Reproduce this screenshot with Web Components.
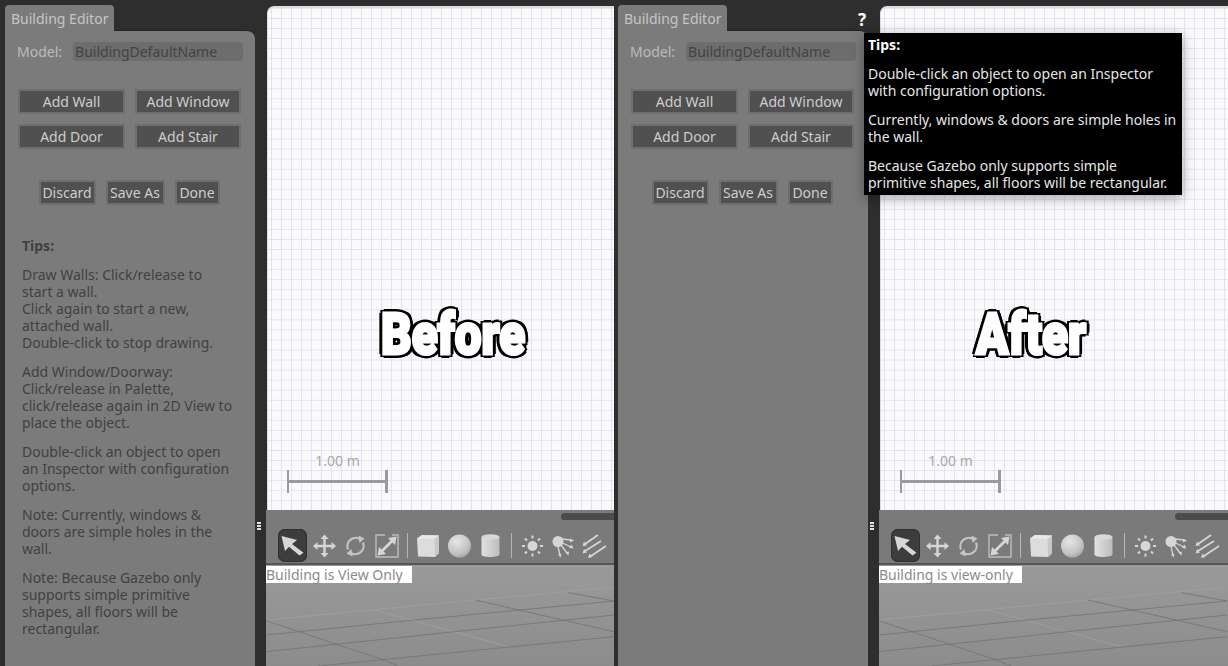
<!DOCTYPE html>
<html lang="en">
<head>
<meta charset="utf-8">
<title>Building Editor</title>
<style>
  html, body { margin: 0; height: 100%; overflow: hidden; background: #2e2e2e; }
  body { font: 14px/17px "Noto Sans", "Open Sans", sans-serif; }
  #compare { display: grid; grid-template-columns: 614px 614px; height: 666px; overflow: hidden; }
  #compare be-pane:last-child { margin-left: -1px; }
</style>
</head>
<body>
<div id="compare">
  <be-pane label="Before" status="Building is View Only">
    <p><b>Tips:</b></p>
    <p>Draw Walls: Click/release to start a wall.<br>Click again to start a new, attached wall.<br>Double-click to stop drawing.</p>
    <p>Add Window/Doorway: Click/release in Palette, click/release again in 2D View to place the object.</p>
    <p>Double-click an object to open an Inspector with configuration options.</p>
    <p>Note: Currently, windows &amp; doors are simple holes in the wall.</p>
    <p>Note: Because Gazebo only supports simple primitive shapes, all floors will be rectangular.</p>
  </be-pane>
  <be-pane label="After" status="Building is view-only" help>
    <b slot="tooltip">Tips:</b>
    <span slot="tooltip">Double-click an object to open an Inspector with configuration options.</span>
    <span slot="tooltip">Currently, windows &amp; doors are simple holes in the wall.</span>
    <span slot="tooltip">Because Gazebo only supports simple primitive shapes, all floors will be rectangular.</span>
  </be-pane>
</div>

<script>
(function () {
  'use strict';

  class BeButton extends HTMLElement {
    constructor() {
      super();
      this.attachShadow({ mode: 'open' });
      this.shadowRoot.innerHTML = `
        <style>
          :host {
            display: flex;
            align-items: center;
            justify-content: center;
            box-sizing: border-box;
            height: 25px;
            padding-bottom: 1px;
            background: #505050;
            border: 2px solid #6f6f6f;
            color: #cdcdcd;
            white-space: nowrap;
          }
        </style>
        <slot></slot>
      `;
    }
  }

  class BeCanvas extends HTMLElement {
    constructor() {
      super();
      this.attachShadow({ mode: 'open' });
      this.shadowRoot.innerHTML = `
        <style>
          :host {
            display: block;
            position: relative;
            box-sizing: border-box;
            height: 504px;
            margin: 6px 0 0 1px;
            border-top: 2px solid #dcdcdc;
            border-left: 1px solid #dcdcdc;
            border-top-left-radius: 7px;
            background-color: #fafafa;
            background-image:
              linear-gradient(#e4e1f6 1px, transparent 1px),
              linear-gradient(90deg, #e4e1f6 1px, transparent 1px);
            background-size: 10px 10.05px;
            background-position: 3px 10px;
          }
          .scale {
            position: absolute;
            left: 19px;
            top: 444px;
            width: 101px;
            height: 41px;
            text-align: center;
            color: #a8a8a8;
          }
          .bar {
            position: absolute;
            left: 0;
            right: 0;
            bottom: 0;
            height: 23px;
            border-left: 2px solid #9b9b9b;
            border-right: 3px solid #9b9b9b;
          }
          .bar::after {
            content: '';
            position: absolute;
            left: 0;
            right: 0;
            top: 10px;
            height: 3px;
            background: #9b9b9b;
          }
        </style>
        <div class="scale">1.00 m<div class="bar"></div></div>
      `;
    }
  }

  class BeToolbar extends HTMLElement {
    constructor() {
      super();
      this.attachShadow({ mode: 'open' });
      const light = '#d6d6d6';
      this.shadowRoot.innerHTML = `
        <style>
          :host {
            display: flex;
            flex: none;
            box-sizing: border-box;
            height: 55px;
            padding: 19px 0 0 12px;
            background: #7a7a7a;
            border-bottom: 2px solid #555;
            position: relative;
            overflow: hidden;
          }
          .thumb {
            position: absolute;
            top: 3px;
            right: 0;
            width: 53px;
            height: 7px;
            border-radius: 4px 0 0 4px;
            background: #4b4b4b;
          }
          .tool { flex: none; width: 31px; height: 33px; }
          .tool svg { display: block; width: 31px; height: 33px; }
          .tool.on svg { width: 29px; background: #3d3d3d; border-radius: 7px; box-shadow: inset 0 0 0 1px #2f2f2f; }
          .sep { flex: none; width: 11px; display: flex; justify-content: center; }
          .sep::before { content: ''; width: 1px; height: 25px; margin-top: 4px; background: #b5b5b5; }
        </style>
        <div class="thumb"></div>
        <div class="tool on"><svg viewBox="0 0 29 33"><path fill="${light}" d="M3.500 7 19 11 14 15 25.500 23.700 21.500 26.500 11 17.700 7 22Z"/></svg></div>
        <div class="tool"><svg viewBox="0 0 31 33">
          <path stroke="${light}" stroke-width="2.400" d="M15.500 9V25M7.500 17H23.500"/>
          <path fill="${light}" d="M15.500 5.500 19.500 10H11.500ZM15.500 28.500 11.500 24H19.500ZM4 17 8.500 13V21ZM27 17 22.500 21V13Z"/>
        </svg></div>
        <div class="tool"><svg viewBox="0 0 31 33">
          <path fill="none" stroke="#c4c4c4" stroke-width="2.200" d="M8 20.500A8.500 8.500 0 0 1 21 10.500M23 13.500A8.500 8.500 0 0 1 10 23.500"/>
          <path fill="#c4c4c4" d="M18.500 6.500 24.500 9.500 19.500 14ZM12.500 27.500 6.500 24.500 11.500 20Z"/>
        </svg></div>
        <div class="tool"><svg viewBox="0 0 31 33">
          <path fill="none" stroke="#bdbdbd" stroke-width="1.400" d="M14 6H5V28H27V19M5 6V15M18 28H27V6H21"/>
          <path stroke="${light}" stroke-width="2.800" d="M10 23 22 11"/>
          <path fill="${light}" d="M25.500 7.500 24 16 17 9ZM6.500 26.500 8 18 15 25Z"/>
        </svg></div>
        <div class="sep"></div>
        <div class="tool"><svg viewBox="0 0 31 33">
          <path fill="#dcdcdc" d="M4 9.500 9 6 26 6.500V24L22 28 5 27.500Z"/>
          <path fill="#e8e8e8" d="M4 9.500 9 6 26 6.500 21.500 10Z"/>
          <path fill="#c8c8c8" d="M21.500 10 26 6.500V24L22 28Z"/>
        </svg></div>
        <div class="tool"><svg viewBox="0 0 31 33">
          <defs><radialGradient id="ball" cx="0.38" cy="0.3" r="0.8"><stop offset="0" stop-color="#e6e6e6"/><stop offset="0.65" stop-color="#c4c4c4"/><stop offset="1" stop-color="#a0a0a0"/></radialGradient></defs>
          <circle cx="15.500" cy="17" r="11.500" fill="url(#ball)"/>
        </svg></div>
        <div class="tool"><svg viewBox="0 0 31 33">
          <defs><linearGradient id="can" x1="0" x2="1" y1="0" y2="0"><stop offset="0" stop-color="#e2e2e2"/><stop offset="1" stop-color="#bcbcbc"/></linearGradient></defs>
          <path fill="url(#can)" d="M6.500 8V25.500C6.500 27 10 28 15 28S24.500 27 24.500 25.500V8Z"/>
          <ellipse cx="15.500" cy="8" rx="9" ry="2.800" fill="#d8d8d8"/>
        </svg></div>
        <div class="sep"></div>
        <div class="tool"><svg viewBox="0 0 31 33">
          <circle cx="15.500" cy="17" r="5" fill="${light}"/>
          <path stroke="${light}" stroke-width="2" d="M15.500 6.500V9.500M15.500 24.500V27.500M5 17H8M23 17H26M8 9.500 10 11.500M21 22.500 23 24.500M23 9.500 21 11.500M10 22.500 8 24.500"/>
        </svg></div>
        <div class="tool"><svg viewBox="0 0 31 33">
          <circle cx="10" cy="12.500" r="5.500" fill="${light}"/>
          <path stroke="${light}" stroke-width="1.300" fill="none" d="M14 10 23 11M14.500 14 23 18M13 16 19 24M10 18 12 26"/>
          <path fill="${light}" d="M26 11.500 22 13.500V9.500ZM25.500 19.500 21 19 23.500 15.500ZM20.500 26.500 17.500 23.500 21 22.500ZM12.500 28.500 10 25.500 13.500 25Z"/>
        </svg></div>
        <div class="tool"><svg viewBox="0 0 31 33">
          <path stroke="${light}" stroke-width="1.700" fill="none" d="M6 15 19 6M6 22 22 12M12 27 27 17"/>
          <path fill="${light}" d="M3.500 17 5 12.500 8 16.500ZM3.500 24.500 5 20 8 23.500ZM9 29 10.500 24.500 13.500 28Z"/>
        </svg></div>
      `;
    }
  }

  class BeView extends HTMLElement {
    static get observedAttributes() { return ['status']; }

    constructor() {
      super();
      this.attachShadow({ mode: 'open' });
      this.shadowRoot.innerHTML = `
        <style>
          :host {
            display: block;
            flex: 1;
            position: relative;
            overflow: hidden;
            background: linear-gradient(#9a9a9a, #8c8c8c);
          }
          svg { position: absolute; left: 0; top: 0; width: 348px; height: 101px; }
          .status {
            position: absolute;
            left: 0;
            top: 1px;
            padding-right: 9px;
            background: #fff;
            color: #8f8a88;
            white-space: nowrap;
          }
        </style>
        <svg viewBox="33 195 1044 303" fill="none">
          <path stroke="#a0a0a0" stroke-width="2.500" d="M33 360 660 300 1077 262M360 330 760 440"/>
          <path stroke="#747474" stroke-width="2.500" d="M33 405 480 360 1077 303M33 455 600 395 1077 345M190 498 1077 410M33 362 380 478 430 498M660 300 1077 395M940 278 1077 303"/>
        </svg>
        <div class="status" id="status"></div>
      `;
    }

    attributeChangedCallback() {
      this.shadowRoot.getElementById('status').textContent = this.getAttribute('status');
    }
  }

  class BePanel extends HTMLElement {
    constructor() {
      super();
      this.attachShadow({ mode: 'open' });
      this.shadowRoot.innerHTML = `
        <style>
          :host {
            display: flex;
            flex-direction: column;
            margin: 5px 0 0 5px;
            width: 250px;
            color: #bcbcbc;
          }
          .tabs { display: flex; justify-content: space-between; height: 25px; flex: none; }
          .tab {
            box-sizing: border-box;
            width: 109px;
            padding: 5px 0 0 6px;
            background: #7b7b7b;
            border-radius: 4px 4px 0 0;
            color: #c6c6c6;
            white-space: nowrap;
            z-index: 1;
            height: 26px;
          }
          .help {
            display: none;
            margin: 6px 2px 0 0;
            color: #fff;
            font: bold 17px/17px "Noto Sans", sans-serif;
          }
          :host([help]) .help { display: block; }
          .body {
            flex: 1;
            box-sizing: border-box;
            padding: 10px 11px 0 12px;
            background: #7b7b7b;
            border-top: 1px solid #222;
            border-top-right-radius: 8px;
          }
          .model { display: flex; align-items: center; height: 20px; }
          .name {
            margin-left: 11px;
            width: 170px;
            box-sizing: border-box;
            padding-left: 2px;
            line-height: 19px;
            border-radius: 4px;
            background: #6d6d6d;
            color: #434343;
          }
          .add {
            display: grid;
            grid-template-columns: 107px 106px;
            gap: 10px;
            margin: 28px 0 0 1px;
          }
          .file { display: flex; justify-content: center; gap: 10px; margin: 31px 3px 0 0; }
          .file be-button:nth-child(1) { width: 57px; }
          .file be-button:nth-child(2) { width: 59px; }
          .file be-button:nth-child(3) { width: 45px; }
          .tips { margin: 32px 0 0 5px; width: 213px; color: #414141; }
          ::slotted(p) { margin: 0 0 12px; }
        </style>
        <div class="tabs">
          <div class="tab">Building Editor</div>
          <div class="help">?</div>
        </div>
        <div class="body">
          <div class="model">Model:<div class="name">BuildingDefaultName</div></div>
          <div class="add">
            <be-button>Add Wall</be-button>
            <be-button>Add Window</be-button>
            <be-button>Add Door</be-button>
            <be-button>Add Stair</be-button>
          </div>
          <div class="file">
            <be-button>Discard</be-button>
            <be-button>Save As</be-button>
            <be-button>Done</be-button>
          </div>
          <div class="tips"><slot></slot></div>
        </div>
      `;
    }
  }

  class BePane extends HTMLElement {
    constructor() {
      super();
      this.attachShadow({ mode: 'open' });
      this.shadowRoot.innerHTML = `
        <style>
          :host {
            display: grid;
            grid-template-columns: 255px 11px minmax(0, 1fr);
            position: relative;
            height: 666px;
            overflow: hidden;
          }
          .grip { display: flex; flex-direction: column; gap: 1px; padding: 522px 0 0 2px; }
          .grip i { width: 4px; height: 2px; background: #e2e2e2; }
          .main { display: flex; flex-direction: column; min-width: 0; }
          .label {
            position: absolute;
            top: 297px;
            transform: translateX(-50%) scaleX(0.82);
            font: 900 58px/74px Roboto, "Liberation Sans", sans-serif;
            color: #fff;
            -webkit-text-stroke: 3px #fff;
            text-shadow: 5px 0 #000, -5px 0 #000, 0 4px #000, 0 -4px #000, 4px 3px #000, -4px 3px #000, 4px -3px #000, -4px -3px #000;
          }
          .tooltip {
            display: none;
            position: absolute;
            left: 251px;
            top: 33px;
            width: 318px;
            height: 162px;
            box-sizing: border-box;
            padding: 3px 4px;
            background: #000;
            color: #e6e6e6;
            box-shadow: 0 3px 12px rgba(0, 0, 0, 0.35);
          }
          :host([help]) .tooltip { display: block; }
          ::slotted([slot="tooltip"]) { display: block; margin: 0 0 12px; }
          ::slotted(b[slot="tooltip"]) { color: #fff; }
        </style>
        <be-panel><slot></slot></be-panel>
        <div class="grip"><i></i><i></i><i></i></div>
        <div class="main">
          <be-canvas></be-canvas>
          <be-toolbar></be-toolbar>
          <be-view id="view"></be-view>
        </div>
        <div class="label" id="label"></div>
        <div class="tooltip"><slot name="tooltip"></slot></div>
      `;
    }

    connectedCallback() {
      const root = this.shadowRoot;
      const isAfter = this.hasAttribute('help');
      root.getElementById('view').setAttribute('status', this.getAttribute('status'));
      const label = root.getElementById('label');
      label.textContent = this.getAttribute('label');
      label.style.left = isAfter ? '418px' : '453px';
      if (isAfter) root.querySelector('be-panel').setAttribute('help', '');
    }
  }

  customElements.define('be-button', BeButton);
  customElements.define('be-canvas', BeCanvas);
  customElements.define('be-toolbar', BeToolbar);
  customElements.define('be-view', BeView);
  customElements.define('be-panel', BePanel);
  customElements.define('be-pane', BePane);
})();
</script>
</body>
</html>
